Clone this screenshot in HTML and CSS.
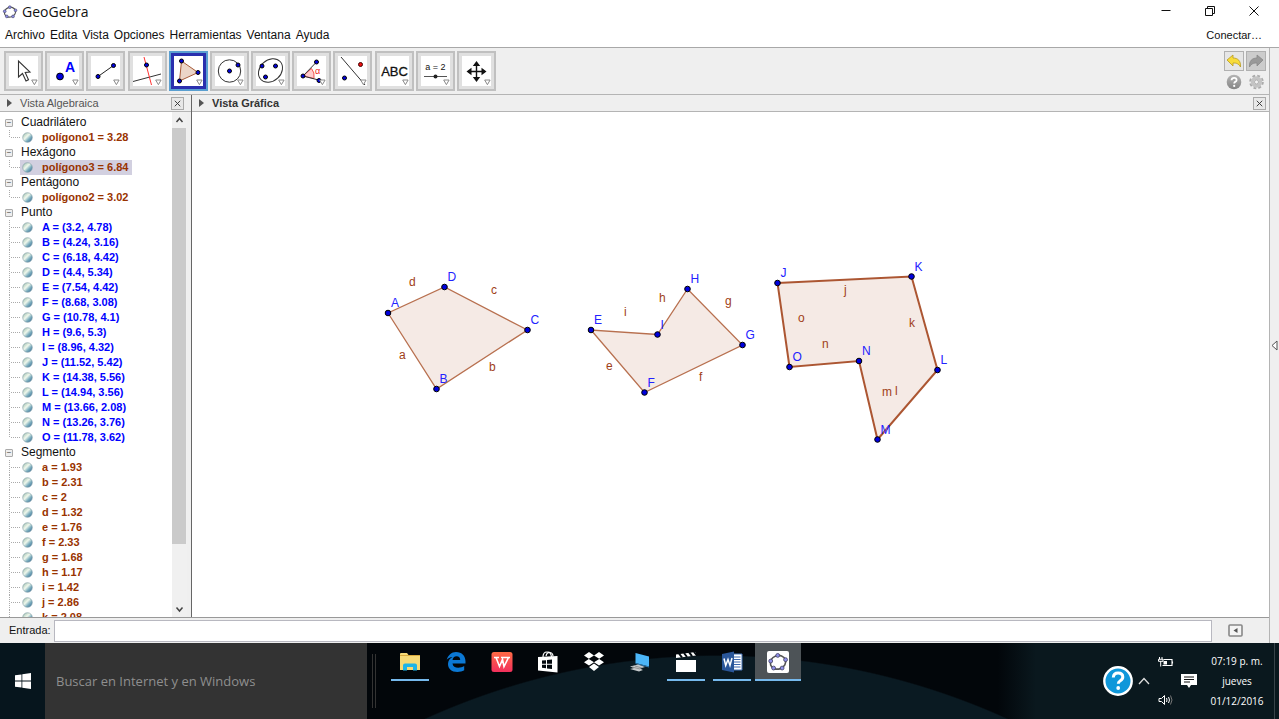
FILE: index.html
```html
<!DOCTYPE html>
<html lang="es">
<head>
<meta charset="utf-8">
<title>GeoGebra</title>
<link rel="stylesheet" href="styles.css">
</head>
<body>
<svg class="defs" aria-hidden="true">
  <defs>
    <linearGradient id="ball" x1="0" y1="0" x2="1" y2="1">
      <stop offset="0" stop-color="#8fb5a5"/><stop offset=".42" stop-color="#f0f8ec"/><stop offset=".65" stop-color="#7fb0bf"/><stop offset="1" stop-color="#2a5f90"/>
    </linearGradient>
    <linearGradient id="wps" x1="0" y1="0" x2="0" y2="1"><stop offset="0" stop-color="#ff6a45"/><stop offset="1" stop-color="#f2305c"/></linearGradient>
    <linearGradient id="gray" x1="0" y1="0" x2="0" y2="1"><stop offset="0" stop-color="#b5b5b5"/><stop offset="1" stop-color="#858585"/></linearGradient>
    <symbol id="more" viewBox="0 0 7 7"><path d="M.7 1h5.4L3.4 5.700z" fill="#fff" stroke="#8a8a8a"/></symbol>
    <symbol id="logo" viewBox="0 0 16 16">
      <ellipse cx="8" cy="8.200" rx="5.700" ry="4.900" transform="rotate(-20 8 8.200)" fill="none" stroke="#555" stroke-width="1.200"/>
      <g fill="#8f8fe8" stroke="#446" stroke-width=".6"><circle cx="7.800" cy="3.200" r="1.400"/><circle cx="13.500" cy="6.300" r="1.400"/><circle cx="11" cy="12.400" r="1.400"/><circle cx="4.800" cy="12.400" r="1.400"/><circle cx="2.700" cy="7.300" r="1.400"/></g>
    </symbol>
  </defs>
</svg>

<header class="titlebar">
  <svg class="app-logo"><use href="#logo"/></svg>
  <h1>GeoGebra</h1>
  <div class="window-controls">
    <button aria-label="Minimizar"><svg viewBox="0 0 12 12"><path d="M1.500 5.500h9"/></svg></button>
    <button aria-label="Restaurar"><svg viewBox="0 0 12 12"><path d="M1.500 3.500h7v7h-7zM3.500 3.500v-2h7v7h-2"/></svg></button>
    <button aria-label="Cerrar"><svg viewBox="0 0 12 12"><path d="M1.500 1.500l9 9M10.500 1.500l-9 9"/></svg></button>
  </div>
</header>

<nav class="menubar">
  <a href="#">Archivo</a><a href="#">Edita</a><a href="#">Vista</a><a href="#">Opciones</a><a href="#">Herramientas</a><a href="#">Ventana</a><a href="#">Ayuda</a>
  <a class="connect" href="#">Conectar…</a>
</nav>

<div class="workspace">
<div class="main">
  <div class="toolbar">
    <div class="tools">
      <button class="tool" aria-label="Elige y mueve"><svg viewBox="0 0 29 30"><path d="M9.500 5v16l4-3.500 3.500 7.500 2.500-1.200-3.300-7.300 4.800-.5z" fill="#fff" stroke="#333" stroke-width="1.100"/><use href="#more" x="22" y="23" width="7" height="7"/></svg></button>
      <button class="tool" aria-label="Punto"><svg viewBox="0 0 29 30"><circle cx="10" cy="20.500" r="3.400" fill="#00d" stroke="#000"/><text x="15" y="15.500" class="big-a">A</text><use href="#more" x="22" y="23" width="7" height="7"/></svg></button>
      <button class="tool" aria-label="Recta"><svg viewBox="0 0 29 30"><path d="M7 20.500L22.500 9.500" stroke="#222"/><g class="pt"><circle cx="7" cy="20.500" r="2"/><circle cx="22.500" cy="9.500" r="2"/></g><use href="#more" x="22" y="23" width="7" height="7"/></svg></button>
      <button class="tool" aria-label="Perpendicular"><svg viewBox="0 0 29 30"><path d="M0 25.500L28 18" stroke="#333"/><path d="M11 1l7.500 28" stroke="#f33"/><circle class="pt" cx="13.500" cy="9" r="2"/><use href="#more" x="22" y="23" width="7" height="7"/></svg></button>
      <button class="tool selected" aria-label="Polígono"><svg viewBox="0 0 29 30"><path d="M7.500 5L24 16.500 5.500 25z" fill="#ebd5c8" stroke="#a65a38"/><g class="pt"><circle cx="7.500" cy="5" r="2"/><circle cx="24" cy="16.500" r="2"/><circle cx="5.500" cy="25" r="2"/></g><use href="#more" x="22" y="23" width="7" height="7"/></svg></button>
      <button class="tool" aria-label="Circunferencia"><svg viewBox="0 0 29 30"><circle cx="14.500" cy="15" r="11.200" fill="none" stroke="#333"/><g class="pt"><circle cx="14.500" cy="15" r="2"/><circle cx="23" cy="9" r="2"/></g><use href="#more" x="22" y="23" width="7" height="7"/></svg></button>
      <button class="tool" aria-label="Elipse"><svg viewBox="0 0 29 30"><ellipse cx="14.500" cy="14.500" rx="13.200" ry="10.500" transform="rotate(-43 14.500 14.500)" fill="none" stroke="#333"/><g class="pt"><circle cx="6" cy="10" r="2"/><circle cx="19.500" cy="10" r="2"/><circle cx="9.500" cy="21" r="2"/></g><use href="#more" x="22" y="23" width="7" height="7"/></svg></button>
      <button class="tool" aria-label="Ángulo"><svg viewBox="0 0 29 30"><path d="M6 20l8.500-7.500q3.500 4 2.500 10z" fill="#fcc" stroke="#e33" stroke-width=".8"/><path d="M19.500 6L6 20l17.500 4.500" fill="none" stroke="#333"/><g class="pt"><circle cx="19.500" cy="6" r="2"/><circle cx="6" cy="20" r="2"/><circle cx="22" cy="24.500" r="2"/></g><text x="18" y="18" class="alpha">α</text><use href="#more" x="22" y="23" width="7" height="7"/></svg></button>
      <button class="tool" aria-label="Simetría"><svg viewBox="0 0 29 30"><path d="M3 1l24 28" stroke="#333"/><circle class="pt" cx="6.500" cy="22" r="2"/><circle cx="22.500" cy="8.500" r="2" fill="#e11" stroke="#400"/><use href="#more" x="22" y="23" width="7" height="7"/></svg></button>
      <button class="tool" aria-label="Texto"><svg viewBox="0 0 29 30"><text x="14.500" y="20" class="abc">ABC</text><use href="#more" x="22" y="23" width="7" height="7"/></svg></button>
      <button class="tool" aria-label="Deslizador"><svg viewBox="0 0 29 30"><text x="14.500" y="14" class="eq">a = 2</text><path d="M3 20.500h23" stroke="#555"/><circle cx="14.500" cy="20.500" r="2" fill="#222"/><use href="#more" x="22" y="23" width="7" height="7"/></svg></button>
      <button class="tool" aria-label="Desplaza vista gráfica"><svg viewBox="0 0 29 30"><path d="M14.500 7v17M6 15.500h17" stroke="#111" stroke-width="1.400"/><path d="M14.500 5l3.700 5h-7.400zM14.500 26l3.700-5h-7.400zM4.500 15.500l5-3.700v7.400zM24.500 15.500l-5-3.700v7.400z" fill="#111"/><use href="#more" x="22" y="23" width="7" height="7"/></svg></button>
    </div>
    <div class="quick">
      <button class="boxed" aria-label="Deshace"><svg viewBox="0 0 18 18"><path d="M2 8l6-5v3c5 0 8 3 7.500 9-2-3.500-4-4-7.500-4v3z" fill="#f8dc3a" stroke="#b79a20" stroke-width=".8"/></svg></button>
      <button class="boxed off" aria-label="Rehace"><svg viewBox="0 0 18 18"><path d="M16 8l-6-5v3c-5 0-8 3-7.500 9 2-3.500 4-4 7.500-4v3z" fill="#999" stroke="#888" stroke-width=".8"/></svg></button>
      <button aria-label="Ayuda"><svg viewBox="0 0 18 18"><circle cx="9" cy="8" r="7.300" fill="url(#gray)"/><path d="M6.500 6.200q.2-2.400 2.600-2.400 2.500 0 2.500 2.100 0 1.200-1.400 2-1 .6-1 1.500" fill="none" stroke="#fff" stroke-width="1.800"/><circle cx="9.200" cy="11.900" r="1.100" fill="#fff"/></svg></button>
      <button aria-label="Preferencias"><svg viewBox="0 0 18 18"><circle cx="9.500" cy="8" r="6.300" fill="none" stroke="#aaa" stroke-width="2" stroke-dasharray="2.800 2.150"/><circle cx="9.500" cy="8" r="4" fill="#eee" stroke="#c4c4c4" stroke-width="3.400"/><circle cx="9.500" cy="8" r="2" fill="#f4f4f4" stroke="#999" stroke-width=".7"/></svg></button>
    </div>
  </div>

  <div class="views">
    <section class="algebra">
      <header class="view-head"><span class="tri"></span><h2>Vista Algebraica</h2><button class="close" aria-label="Cerrar vista algebraica"><svg viewBox="0 0 12 12"><path d="M3 3l6 6M9 3l-6 6"/></svg></button></header>
      <div class="algebra-body">
        <div class="tree" id="tree"></div>
        <div class="scroll"><svg viewBox="0 0 15 16"><path d="M4.500 10l3-3.500 3 3.500"/></svg><div class="thumb"></div><svg class="down" viewBox="0 0 15 16"><path d="M4.500 6.500l3 3.500 3-3.500"/></svg></div>
      </div>
    </section>
    <section class="graphics">
      <header class="view-head"><span class="tri"></span><h2 class="active">Vista Gráfica</h2><button class="close" aria-label="Cerrar vista gráfica"><svg viewBox="0 0 12 12"><path d="M3 3l6 6M9 3l-6 6"/></svg></button></header>
      <svg class="plot" id="plot" role="img" aria-label="Polígonos"></svg>
    </section>
  </div>

  <form class="entry">
    <label for="entrada">Entrada:</label><input id="entrada" type="text">
    <button type="button" aria-label="Lista de comandos"><svg viewBox="0 0 15 13"><rect x="1" y="1" width="13" height="11" rx="1" fill="#f4f4f4" stroke="#888" stroke-width="1.600"/><path d="M9.500 4v5l-4-2.500z" fill="#555"/></svg></button>
  </form>
</div>
<aside class="side"><button aria-label="Apariencias"><svg viewBox="0 0 7 11"><path d="M6 1v9L1 5.500z" fill="#fff" stroke="#555"/></svg></button></aside>
</div>

<footer class="taskbar">
  <button class="start" aria-label="Inicio"><svg viewBox="0 0 16 16"><path d="M0 2.300l6.500-.9v6.200H0zM7.300 1.300L16 0v7.600H7.300zM0 8.400h6.500v6.200L0 13.700zM7.300 8.400H16V16l-8.700-1.300z" fill="#fff"/></svg></button>
  <input class="search" type="text" aria-label="Buscar" placeholder="Buscar en Internet y en Windows">
  <div class="grip"></div>
  <div class="apps">
    <button class="open" aria-label="Explorador"><svg viewBox="0 0 22 22"><path d="M1 3q0-1 1-1h6l1.500 2H20q1 0 1 1v14H1z" fill="#f7d976"/><path d="M1 4.500h20" stroke="#d9a93c"/><path d="M4 19.500v-5q0-2 2-2h10q2 0 2 2v5h-4v-3.500H8v3.500z" fill="#1fb4e8"/></svg></button>
    <button aria-label="Edge"><svg viewBox="0 0 22 22"><path d="M1.500 9.500C3 4 6.500 1 11 1c6 0 9.500 4 9.500 9.500v2H7.500c.3 3 2.700 4.300 5.700 4.300 2.300 0 4.300-.6 6-1.700v4.200c-2 1.100-4.200 1.700-6.800 1.700-6 0-9.400-3.300-9.400-8 0-3.300 1.800-5.700 4.500-7-2.500.3-4.500 1.300-6 3zM7.500 9h7.700c0-2.300-1.200-3.800-3.600-3.800S7.900 6.700 7.500 9z" fill="#0b78d4"/></svg></button>
    <button aria-label="WPS Writer"><svg viewBox="0 0 22 22"><rect x=".5" y="1" width="21" height="20" rx="2.500" fill="url(#wps)"/><path d="M3 6.500h5M10 6.500h9M5 6.500l3.500 9 3-7 1.500 7 4.500-9" fill="none" stroke="#fff" stroke-width="1.600"/></svg></button>
    <button aria-label="Tienda"><svg viewBox="0 0 22 22"><path d="M1 6l19.500-1v16.500L1 19.500z" fill="#fff"/><path d="M6 6q0-5 4-5t4.500 5M9 5q1-4 4-3.500t3 4" fill="none" stroke="#fff" stroke-width="1.200"/><path d="M5 9.500l4-.3v3.500H5zM10 9l5-.5v4.200h-5zM5 13.700h4v3.500l-4-.4zM10 13.700h5v4.200l-5-.5z" fill="#03090e"/></svg></button>
    <button aria-label="Dropbox"><svg viewBox="0 0 22 22"><path d="M6 1l5 3.500-5.200 3.300L1 4.500zM16 1l5 3.500-4.800 3.300L11 4.500zM5.800 8L11 11.200 6 14.500 1 11.200zM16.200 8l4.800 3.200-5 3.300-5-3.300zM11 12.500l5 3.500-5 4-5-4z" fill="#fff"/></svg></button>
    <button aria-label="Equipo"><svg viewBox="0 0 22 22"><path d="M6.500 2L20 5.500v10L6.500 12z" fill="#4bb5f7"/><path d="M6.500 12L20 15.500v1L6.500 13z" fill="#2b78b0"/><path d="M1 15.500l8-2 7 2.500-5 1.500 3 1.500-4 1.500-9-2.500 4-1z" fill="#c5c9cb"/><path d="M3 16l8 2M6 15l7 2" stroke="#777" stroke-width=".7"/></svg></button>
    <button class="open" aria-label="Películas"><svg viewBox="0 0 22 22"><path d="M1 9h20v12H1z" fill="#fff"/><path d="M1 3.500L21 1v3.500L1 7z" fill="#fff"/><path d="M4 2.500l3 4M9 2l3 4M14 1.200l3 4M19 .8l2.500 3" stroke="#03090e" stroke-width="2"/></svg></button>
    <button class="open" aria-label="Word"><svg viewBox="0 0 22 22"><path d="M12 3h9v16h-9z" fill="#fff" stroke="#4472b5"/><path d="M13 6h6.500M13 8.500h6.500M13 11h6.500M13 13.500h6.500M13 16h6.500" stroke="#3c67ad"/><path d="M1 3l12-2.500v21L1 19z" fill="#2a5699"/><path d="M3 7.500l1.700 7L7 8.500l2 6 2-7.500" fill="none" stroke="#fff" stroke-width="1.500"/></svg></button>
    <button class="open current" aria-label="GeoGebra"><svg viewBox="0 0 22 22"><rect width="22" height="22" rx="2" fill="#fff"/><use href="#logo" x="0" y="0" width="22" height="22"/></svg></button>
  </div>
  <div class="tray">
    <button aria-label="Obtener ayuda"><svg class="help" viewBox="0 0 30 30"><circle cx="15" cy="15" r="13.700" fill="#0f97da" stroke="#fff" stroke-width="2.400"/><path d="M10.300 11.500q.3-4.500 4.800-4.500 4.700 0 4.700 4 0 2.300-2.500 3.800-2 1.200-2 3" fill="none" stroke="#fff" stroke-width="3"/><circle cx="15.200" cy="22" r="1.900" fill="#fff"/></svg></button>
    <button aria-label="Iconos ocultos"><svg class="chev" viewBox="0 0 12 8"><path d="M1 7l5-5.500L11 7" fill="none" stroke="#ddd" stroke-width="1.300"/></svg></button>
    <div class="status">
      <button aria-label="Batería"><svg viewBox="0 0 16 12"><path d="M5.500 3.500h8.500v6H4.500M14.500 5.500v2" fill="none" stroke="#fff" stroke-width="1.100"/><path d="M5.500 5h3.500v3.500H5.500z" fill="#fff"/><path d="M1.500 1v2M4 1v2M.5 3.300h4.500v2H.5zM2.700 5v5.500" fill="none" stroke="#fff"/></svg></button>
      <button aria-label="Volumen"><svg viewBox="0 0 16 12"><path d="M1 4.500h2.500L6.500 1.500v9l-3-3H1z" fill="none" stroke="#fff"/><path d="M8.500 4q1 2 0 4M10.500 3q2 3 0 6" fill="none" stroke="#fff"/><path d="M12.500 1.500q3 4.500 0 9" fill="none" stroke="#777"/></svg></button>
    </div>
    <button aria-label="Notificaciones"><svg class="note" viewBox="0 0 16 16"><path d="M0 1h16v11h-6l-2 3-2-3H0z" fill="#fff"/><path d="M3 4h10M3 6.500h10M3 9h6" stroke="#111" stroke-width="1.100"/></svg></button>
    <div class="clock"><time>07:19 p. m.</time><span>jueves</span><span>01/12/2016</span></div>
  </div>
</footer>
<script src="app.js"></script>
</body>
</html>
```
FILE: styles.css
```css
*, *::before, *::after { box-sizing: border-box; }
body {
  margin: 0; height: 100vh; display: flex; flex-direction: column; overflow: hidden;
  font: 11px/15px "Liberation Sans", Arial, sans-serif; color: #111; background: #fff;
}
button { border: 0; padding: 0; background: none; font: inherit; display: grid; place-items: center; }
a { color: inherit; text-decoration: none; }
h1, h2 { margin: 0; font: inherit; }
svg { display: block; }
.defs { position: absolute; width: 0; height: 0; }

.titlebar { flex: 0 0 24px; display: flex; align-items: center; gap: 4px; padding-left: 2px; }
.app-logo { width: 16px; height: 16px; }
.titlebar h1 { font: 14px/22px "Open Sans", "Noto Sans", sans-serif; }
.window-controls { margin-left: auto; display: flex; height: 22px; padding-right: 3px; align-self: flex-start; }
.window-controls button { width: 44px; }
.window-controls svg { width: 12px; height: 12px; fill: none; stroke: #111; }
.menubar { flex: 0 0 23px; display: flex; align-items: center; gap: 5px; padding: 0 17px 0 5px; font-size: 12px; }
.connect { margin-left: auto; font-size: 11px; }

.workspace { flex: 1; min-height: 0; display: flex; border-top: 1px solid #a8a8a8; }
.main { flex: 1; min-width: 0; display: flex; flex-direction: column; }
.side { flex: 0 0 10px; display: grid; place-items: center; background: #efefef; border-left: 1px solid #b4b4b4; }
.side svg { width: 7px; height: 11px; }

.toolbar { flex: 0 0 47px; display: flex; justify-content: space-between; padding: 3px 3px 0 4px; background: #efefef; border-bottom: 1px solid #b4b4b4; }
.tools { flex: 0 0 492px; display: flex; justify-content: space-between; }
.tool { width: 39px; height: 40px; border: 2px solid #c0c0c0; background: #e0e0e0; }
.tool svg { width: 29px; height: 30px; background: #fff; }
.tool.selected { border-color: #5a9fd0; background: #2a2fae; }
.pt { fill: #00d; stroke: #000; stroke-width: 1; }
.big-a { font: bold 14px "Liberation Sans", sans-serif; fill: #00f; }
.alpha { font: 9px "Liberation Sans", sans-serif; fill: #e22; }
.abc { font: 13px "Liberation Sans", sans-serif; text-anchor: middle; fill: #111; stroke: #111; stroke-width: .3; }
.eq { font: 9px "Liberation Sans", sans-serif; text-anchor: middle; fill: #111; }
.quick { display: grid; grid-template-columns: 20px 20px; grid-template-rows: 20px 20px; gap: 2px; }
.quick svg { width: 18px; height: 18px; }
.boxed { border: 1px solid #b0b0b0; background: #e6e6e6; }
.boxed.off { background: #ccc; }

.views { flex: 1; min-height: 0; display: flex; }
.algebra { flex: 0 0 192px; display: flex; flex-direction: column; border-right: 1px solid #666; background: #efefef; }
.graphics { flex: 1; min-width: 0; display: flex; flex-direction: column; }
.view-head { flex: 0 0 17px; display: flex; align-items: center; padding: 0 3px 0 7px; background: #efefef; border-bottom: 1px solid #b4b4b4; }
.algebra .view-head { padding-right: 7px; }
.tri { border: 4px solid transparent; border-left: 5px solid #555; border-right: 0; margin-right: 8px; }
.view-head h2 { color: #555; }
.view-head h2.active { color: #333; font-weight: bold; }
.close { margin-left: auto; width: 13px; height: 13px; border: 1px solid #aaa; background: #e8e8e8; }
.close svg { width: 11px; height: 11px; fill: none; stroke: #333; }
.algebra-body { flex: 1; min-height: 0; display: flex; padding-right: 4px; }
.tree { flex: 1; min-width: 0; overflow: hidden; padding: 3px 0 0 5px; background: #fff; }
.tree ul { list-style: none; margin: 0; padding: 0; }
.group { display: flex; align-items: center; gap: 8px; height: 15px; font-size: 12px; }
.group::before { content: "−"; width: 8px; height: 8px; border: 1px solid #aaa; border-radius: 1px; background: #eee; font: 8px/6px "Liberation Sans", sans-serif; text-align: center; color: #444; }
.tree li { display: flex; height: 15px; margin-left: 4px; }
.tree li::before {
  content: ""; width: 11px;
  background: repeating-linear-gradient(#aaa 0 1px, #fff 1px 2px) 0 0 / 1px 100% no-repeat, repeating-linear-gradient(90deg, #aaa 0 1px, #fff 1px 2px) 0 7px / 11px 1px no-repeat;
}
.tree li:last-child::before { background-size: 1px 8px, 11px 1px; }
.item { display: flex; align-items: center; gap: 9px; padding: 0 3px 0 2px; font-weight: bold; color: #993300; }
.item svg { width: 11px; height: 11px; }
.item.point { color: #0000ff; }
.item.picked { background: #d2d0e0; }
.scroll { flex: 0 0 15px; display: flex; flex-direction: column; background: #f0f0f0; }
.scroll svg { height: 16px; fill: none; stroke: #444; stroke-width: 1.500; }
.thumb { flex: 0 1 416px; margin: 0 1px 0 0; background: #cacaca; }
.scroll .down { margin-top: auto; }

.plot { flex: 1; width: 100%; min-height: 0; background: #fff; }
.plot text { font: 12px "Liberation Sans", sans-serif; fill: #a04018; }
.plot .name { fill: #2222ff; }
.poly { fill: #993300; fill-opacity: .1; stroke: #b8704f; stroke-width: 1.300; }
.poly.strong { stroke: #ac5632; stroke-width: 2; }
.vertex { fill: #00d; stroke: #000; }

.entry { flex: 0 0 26px; display: flex; align-items: center; margin: 0; padding: 0 26px 0 9px; background: #efefef; border-top: 1px solid #999; }
.entry input { flex: 1; min-width: 0; height: 22px; margin: 0 16px 0 3px; border: 1px solid #b8b8c0; background: #fff; font: inherit; }
.entry svg { width: 15px; height: 13px; }

.taskbar {
  flex: 0 0 76px; display: flex; color: #fff; font-family: "Open Sans", "Noto Sans", sans-serif;
  background: linear-gradient(90deg, #06151d 0 4%, transparent 4% 78%, #0a181e 81%), radial-gradient(circle 703px at 56% 715px, #0a1a22 99.800%, #02060a 100%);
}
.start { width: 45px; }
.start svg { width: 16px; height: 16px; }
.search { width: 322px; border: 0; padding: 0 11px; background: #333; color: #ddd; font: 13px "Open Sans", "Noto Sans", sans-serif; }
.search::placeholder { color: #8f8f8f; opacity: 1; }
.grip { width: 4px; height: 54px; margin: 11px 11px 0 5px; border: 1px solid #333; border-width: 0 1px; }
.apps { display: flex; height: 38px; }
.apps button { width: 46px; position: relative; }
.apps svg { width: 22px; height: 22px; }
.apps .open::after { content: ""; position: absolute; left: 4px; right: 4px; bottom: 0; height: 2px; background: #76b9ed; }
.apps .current { background: #4d5357; }
.apps .current::after { left: 0; right: 0; }
.tray { margin-left: auto; display: flex; align-items: center; margin-right: 4px; padding-right: 9px; border-right: 1px solid #39444a; }
.help { width: 30px; height: 30px; }
.chev { width: 12px; height: 8px; margin: 0 8px 0 5px; }
.status { display: flex; flex-direction: column; gap: 26px; }
.status svg { width: 16px; height: 12px; }
.note { width: 16px; height: 16px; margin: 0 12px 0 7px; }
.clock { display: flex; flex-direction: column; align-items: center; width: 56px; font-size: 10px; line-height: 20px; white-space: nowrap; }
```
FILE: app.js
```js
const groups = [
  ["Cuadrilátero", ["polígono1 = 3.28"]],
  ["Hexágono", ["polígono3 = 6.84"]],
  ["Pentágono", ["polígono2 = 3.02"]],
  ["Punto", ["A = (3.2, 4.78)", "B = (4.24, 3.16)", "C = (6.18, 4.42)", "D = (4.4, 5.34)", "E = (7.54, 4.42)", "F = (8.68, 3.08)", "G = (10.78, 4.1)", "H = (9.6, 5.3)", "I = (8.96, 4.32)", "J = (11.52, 5.42)", "K = (14.38, 5.56)", "L = (14.94, 3.56)", "M = (13.66, 2.08)", "N = (13.26, 3.76)", "O = (11.78, 3.62)"]],
  ["Segmento", ["a = 1.93", "b = 2.31", "c = 2", "d = 1.32", "e = 1.76", "f = 2.33", "g = 1.68", "h = 1.17", "i = 1.42", "j = 2.86", "k = 2.08"]]
];
const ball = '<svg viewBox="0 0 11 11"><circle cx="5.5" cy="5.5" r="4.8" fill="url(#ball)" stroke="#7d9aa5" stroke-width=".6"/></svg>';
document.getElementById("tree").innerHTML = groups.map(([name, items]) =>
  `<div class="group">${name}</div><ul>` + items.map(t =>
    `<li><span class="item${name === "Punto" ? " point" : ""}${name === "Hexágono" ? " picked" : ""}">${ball}${t}</span></li>`).join("") + "</ul>").join("");

const points = {
  A: [196, 201], B: [244.500, 277], C: [335.500, 218], D: [252.500, 175],
  E: [399, 218], F: [452.500, 280.500], G: [550.500, 233], H: [495.500, 177], I: [465.500, 222.500],
  J: [585.500, 171], K: [719.500, 164.500], L: [745.500, 258], M: [685.500, 327.500], N: [667, 249], O: [597.500, 255]
};
const sides = { a: [207, 247], b: [297, 259], c: [299, 182], d: [217, 174], e: [414, 258], f: [507, 269], g: [533, 193], h: [467, 190], i: [432, 204], j: [652, 182], k: [717, 215], l: [703, 283], m: [690, 284], n: [630, 236], o: [606, 210] };
const poly = (names, cls) => `<polygon class="poly ${cls}" points="${[...names].map(n => points[n].join()).join(" ")}"/>`;
document.getElementById("plot").innerHTML =
  poly("ABCD", "") + poly("EFGHI", "") + poly("JKLMNO", "strong") +
  Object.entries(sides).map(([n, [x, y]]) => `<text x="${x}" y="${y}">${n}</text>`).join("") +
  Object.entries(points).map(([n, [x, y]]) => `<circle class="vertex" cx="${x}" cy="${y}" r="2.8"/><text class="name" x="${x + 3}" y="${y - 6}">${n}</text>`).join("");
```
